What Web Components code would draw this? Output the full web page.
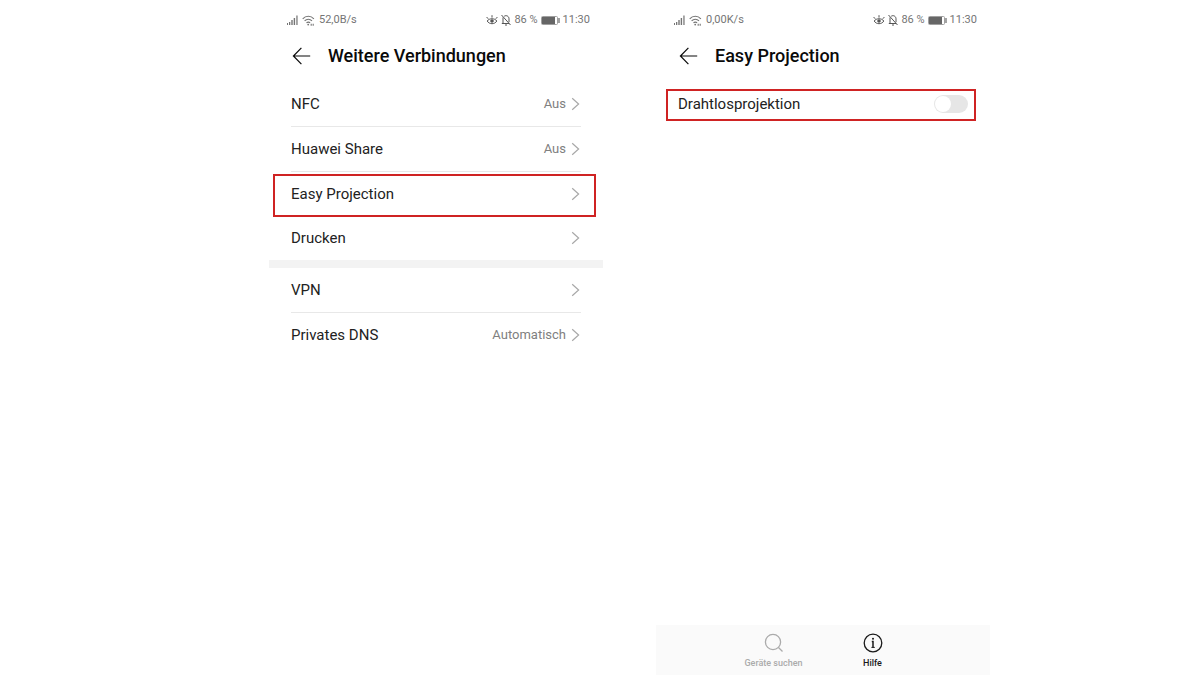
<!DOCTYPE html>
<html lang="de">
<head>
<meta charset="utf-8">
<meta name="viewport" content="width=device-width, initial-scale=1">
<title>Easy Projection</title>
<style>
  body { margin: 0; background: #fff; color: #222; font-family: Roboto, "Noto Sans", sans-serif; }
</style>
</head>
<body>
<screen-pair>
  <phone-screen slot="first">
    <status-bar slot="top" rate="52,0B/s" battery="86 %" time="11:30"></status-bar>
    <title-bar slot="top">Weitere Verbindungen</title-bar>
    <settings-group>
      <settings-row divided value="Aus">NFC</settings-row>
      <settings-row divided value="Aus">Huawei Share</settings-row>
      <settings-row marked>Easy Projection</settings-row>
      <settings-row>Drucken</settings-row>
    </settings-group>
    <settings-group>
      <settings-row divided>VPN</settings-row>
      <settings-row value="Automatisch">Privates DNS</settings-row>
    </settings-group>
  </phone-screen>
  <phone-screen slot="second">
    <status-bar slot="top" rate="0,00K/s" battery="86 %" time="11:30"></status-bar>
    <title-bar slot="top">Easy Projection</title-bar>
    <settings-group>
      <toggle-row label="Drahtlosprojektion"></toggle-row>
    </settings-group>
    <tool-bar slot="bottom">
      <tool-button icon="search" disabled>Geräte suchen</tool-button>
      <tool-button icon="info">Hilfe</tool-button>
    </tool-bar>
  </phone-screen>
</screen-pair>

<script>
class BaseElement extends HTMLElement {
  connectedCallback() {
    if (this.shadowRoot) return;
    const t = document.createElement('template');
    t.innerHTML = '<style>*{box-sizing:border-box}</style>' + this.render();
    this.attachShadow({ mode: 'open' }).append(t.content.cloneNode(true));
  }
}

customElements.define('screen-pair', class extends BaseElement {
  render() {
    return `<style>
      :host { display: grid; grid-template-columns: 269fr 334fr 53fr 334fr 210fr; min-height: 100vh; }
      ::slotted([slot="first"]) { grid-column: 2; }
      ::slotted([slot="second"]) { grid-column: 4; }
    </style><slot name="first"></slot><slot name="second"></slot>`;
  }
});

customElements.define('phone-screen', class extends BaseElement {
  render() {
    return `<style>
      :host { display: flex; flex-direction: column; min-width: 0; }
      main { flex: 1; padding-top: 8px; }
    </style>
    <slot name="top"></slot><main><slot></slot></main><slot name="bottom"></slot>`;
  }
});

customElements.define('status-bar', class extends BaseElement {
  render() {
    const a = n => this.getAttribute(n);
    return `<style>
      :host { display: flex; justify-content: space-between; align-items: center; height: 38px;
              padding: 2px 13px 0 18px; box-sizing: border-box; font-size: 11px; line-height: 16px; color: #757575; white-space: nowrap; }
      div { display: flex; align-items: center; }
      .left { gap: 4px; }
      .right { gap: 3px; }
      svg { display: block; }
    </style>
    <div class="left">
      <svg width="11" height="10" viewBox="0 0 11 10" fill="#757575" aria-hidden="true">
        <path d="M0 8h1v2H0zM2 7h1.3v3H2zM4.3 5h1.4v5H4.3zM6.7 3h1.4v7H6.7z"/><path d="M9.2 .5h1.5V10H9.2z" fill="#8d8d8d"/>
      </svg>
      <svg width="13" height="11" viewBox="0 0 13 11" fill="none" stroke="#757575" stroke-width="1.1" aria-hidden="true">
        <path d="M.7 3.8C3.8.3 8.8.3 11.9 3.8M2.6 5.9c2.1-2.3 5.3-2.3 7.4 0M4.5 7.9c1-1.1 2.6-1.1 3.6 0"/>
        <circle cx="6.2" cy="9.6" r=".9" fill="#757575" stroke="none"/>
        <path d="M9.2 8.8v1.9M11.2 8.8v1.9"/>
      </svg>
      <span>${a('rate')}</span>
    </div>
    <div class="right">
      <svg width="12" height="12" viewBox="0 0 12 12" fill="none" stroke="#555" aria-hidden="true">
        <path d="M1.2 7C3.2 4 8.8 4 10.8 7 8.8 10.6 3.2 10.6 1.2 7zM6 1.2v2.4M.6 3l1.6 1.8M11.4 3 9.8 4.8"/>
        <circle cx="6" cy="7" r="1.8" fill="#555" stroke="none"/>
      </svg>
      <svg width="10" height="12" viewBox="0 0 10 12" fill="none" stroke="#555" aria-hidden="true">
        <path d="M.8 9.5h7.4M2 9.5V3.4M3.2 2.2C5.6.8 8 2.4 8 4.8v3.4M4 11h2M.5 1l9 10"/>
      </svg>
      <span>${a('battery')}</span>
      <svg width="19" height="9" viewBox="0 0 19 9" aria-hidden="true">
        <rect x=".5" y=".5" width="16" height="8" rx="1" fill="#fff" stroke="#a0a0a0"/>
        <path d="M1 1h13v7H1z" fill="#666"/><path d="M17.4 2h1.2v5h-1.2z" fill="#666"/>
      </svg>
      <span>${a('time')}</span>
    </div>`;
  }
});

customElements.define('title-bar', class extends BaseElement {
  render() {
    return `<style>
      :host { display: flex; align-items: center; gap: 17px; height: 36px; padding: 0 22px 0 23px; box-sizing: border-box; color: #0a0a0a; }
      button { display: block; border: 0; padding: 0; background: none; color: inherit; }
      svg { display: block; }
      h1 { margin: 0; font-size: 18px; line-height: 24px; font-weight: 500; white-space: nowrap; }
    </style>
    <button type="button" aria-label="Zurück">
      <svg width="19" height="18" viewBox="0 0 19 18" fill="none" stroke="currentColor" stroke-width="1.2"><path d="M9.4 .8 1.4 9l8 8.2M1.4 9h16.8"/></svg>
    </button>
    <h1><slot></slot></h1>`;
  }
});

customElements.define('settings-group', class extends BaseElement {
  render() {
    return `<style>
      :host { display: block; }
      :host(:not(:first-of-type)) { border-top: 8px solid #f3f3f3; }
    </style><slot></slot>`;
  }
});

customElements.define('settings-row', class extends BaseElement {
  render() {
    return `<style>
      :host { display: block; position: relative; padding: 0 22px; }
      a { display: flex; align-items: center; gap: 5px; height: 44px; color: inherit; text-decoration: none;
          font-size: 15px; line-height: 20px; white-space: nowrap; }
      :host([divided]) a { box-sizing: content-box; border-bottom: 1px solid #e8e8e8; }
      .label { flex: 1; }
      .value { font-size: 13px; color: #808080; }
      svg { display: block; margin-right: 1px; }
      :host([marked])::after { content: ""; position: absolute; inset: 2px 7px -1px 4px; border: 2px solid #cf2323; pointer-events: none; }
    </style>
    <a href="#"><span class="label"><slot></slot></span>
      <span class="value">${this.getAttribute('value') || ''}</span>
      <svg width="9" height="14" viewBox="0 0 9 14" fill="none" stroke="#a8a8a8" stroke-width="1.2" aria-hidden="true"><path d="M1.2 1.2 7.6 7l-6.4 5.8"/></svg>
    </a>`;
  }
});

customElements.define('toggle-row', class extends BaseElement {
  render() {
    return `<style>
      :host { display: block; position: relative; padding: 0 22px; }
      label { display: flex; align-items: center; justify-content: space-between; height: 44px; font-size: 15px; line-height: 20px; }
      input { appearance: none; display: flex; align-items: center; width: 34px; height: 18px; margin: 0; padding: 1px; border-radius: 9px; background: #e6e6e6; }
      input::before { content: ""; width: 16px; height: 16px; border-radius: 50%; background: #fff; }
      input:checked { justify-content: flex-end; background: #007dff; }
      :host::after { content: ""; position: absolute; inset: 7px 14px 5px 10px; border: 2px solid #cf2323; pointer-events: none; }
    </style>
    <label><span>${this.getAttribute('label')}</span><input type="checkbox" role="switch"></label>`;
  }
});

customElements.define('tool-bar', class extends BaseElement {
  render() {
    return `<style>
      :host { display: flex; justify-content: center; height: 50px; background: #fafafa; }
    </style><slot></slot>`;
  }
});

const ICONS = {
  search: '<circle cx="9" cy="9" r="7.6"/><path d="m14.5 14.5 4 4"/>',
  info: '<circle cx="10" cy="10" r="8.8"/><path d="M8.8 8.6H10v5.8" stroke-width="1.5"/><path d="M8.4 14.4h3.4" stroke-width="1"/><circle cx="10" cy="5.8" r="1" fill="currentColor" stroke="none"/>'
};
customElements.define('tool-button', class extends BaseElement {
  render() {
    const off = this.hasAttribute('disabled');
    return `<style>
      :host { display: block; width: 99px; }
      button { display: flex; flex-direction: column; align-items: center; gap: 3px; width: 100%; padding: 8px 0 0; border: 0;
               background: none; font: 500 9px/14px Roboto, "Noto Sans", sans-serif; color: #1a1a1a; white-space: nowrap; }
      button:disabled { color: #ababab; }
      svg { display: block; }
    </style>
    <button type="button" ${off ? 'disabled' : ''}>
      <svg width="20" height="20" viewBox="0 0 20 20" fill="none" stroke="currentColor" stroke-width="1.3" aria-hidden="true">${ICONS[this.getAttribute('icon')]}</svg>
      <span><slot></slot></span>
    </button>`;
  }
});
</script>
</body>
</html>
